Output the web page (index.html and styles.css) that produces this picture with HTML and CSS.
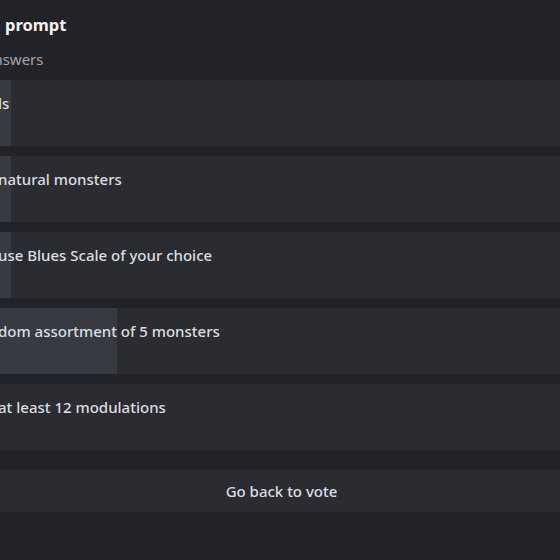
FILE: index.html
```html
<!DOCTYPE html>
<html>
<head>
<meta charset="utf-8">
<link rel="stylesheet" href="styles.css">
</head>
<body>
<div class="page">
  <header class="head">
    <h1 class="title">prompt</h1>
    <p class="sub">answers</p>
  </header>
  <ul class="answers">
    <li class="answer"><div class="bar" style="width:11px"></div><span class="label">ls</span></li>
    <li class="answer"><div class="bar" style="width:11px"></div><span class="label">natural monsters</span></li>
    <li class="answer"><div class="bar" style="width:11px"></div><span class="label">use Blues Scale of your choice</span></li>
    <li class="answer"><div class="bar" style="width:117px"></div><span class="label">dom assortment of 5 monsters</span></li>
    <li class="answer"><div class="bar" style="width:0px"></div><span class="label">at least 12 modulations</span></li>
  </ul>
  <button class="back">Go back to vote</button>
</div>
</body>
</html>
```
FILE: styles.css
```css
* { box-sizing: border-box; }
html, body { margin: 0; padding: 0; }
body {
  background: #222329;
  font-family: "Noto Sans", "Open Sans", sans-serif;
  width: 560px;
  height: 560px;
  overflow: hidden;
}
.page {
  display: flex;
  flex-direction: column;
  padding-top: 13px;
}
.head { padding-left: 5px; }
.title {
  margin: 0;
  font-size: 16.5px;
  line-height: 24px;
  font-weight: 700;
  color: #f2f3f5;
}
.sub {
  margin: 11px 0 0 -20px;
  font-size: 15px;
  line-height: 22px;
  font-weight: 400;
  color: #a3a6ad;
}
.answers {
  list-style: none;
  margin: 10px 0 0;
  padding: 0;
  display: flex;
  flex-direction: column;
  gap: 10px;
}
.answer {
  position: relative;
  height: 66px;
  background: #2b2c32;
  padding: 13px 0 0 0;
}
.bar {
  position: absolute;
  left: 0; top: 0; bottom: 0;
  background: #383a42;
}
.label {
  position: relative;
  display: block;
  margin-left: -2px;
  font-size: 15px;
  line-height: 20px;
  font-weight: 500;
  color: #dbdee1;
  white-space: nowrap;
}
.back {
  margin-top: 20px;
  height: 42px;
  width: 100%;
  border: 0;
  background: #2b2c32;
  color: #dbdee1;
  font-family: inherit;
  font-size: 15px;
  font-weight: 500;
  padding: 0 0 0 3px;
}
```
